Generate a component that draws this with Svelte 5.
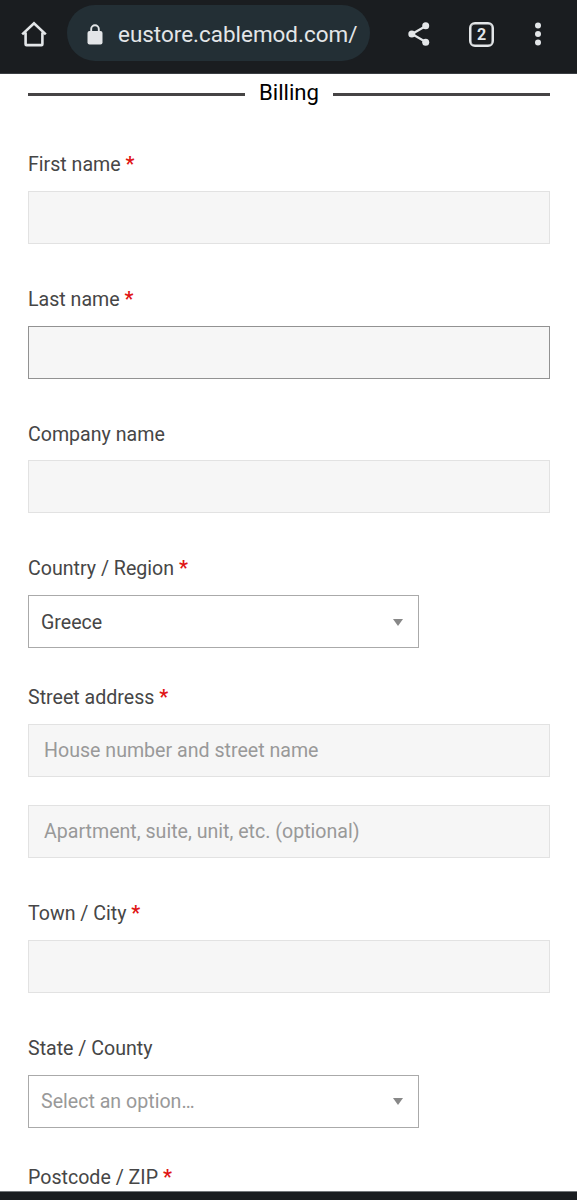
<script>
  let url = "eustore.cablemod.com/";
  let openTabs = 2;

  let fields = [
    { label: "First name", required: true, inputs: [""] },
    { label: "Last name", required: true, inputs: [""], active: true },
    { label: "Company name", inputs: [""] },
    { label: "Country / Region", required: true, select: "Greece" },
    {
      label: "Street address",
      required: true,
      inputs: [
        "House number and street name",
        "Apartment, suite, unit, etc. (optional)",
      ],
    },
    { label: "Town / City", required: true, inputs: [""] },
    { label: "State / County", select: "Select an option…", empty: true },
    { label: "Postcode / ZIP", required: true },
  ];
</script>

<div class="screen">
  <header class="toolbar">
    <svg class="home" width="26" height="26" viewBox="0 0 26 26">
      <path
        d="M1.2 13.4 13 2.2l11.8 11.2M4.6 11.4V23.2q0 .9.9.9H20.5q.9 0 .9-.9V11.4"
        fill="none"
        stroke="currentColor"
        stroke-width="2.6"
      />
    </svg>

    <div class="address">
      <svg width="16" height="21" viewBox="0 0 16 21">
        <path d="M4.2 8.5V5a3.8 3.8 0 0 1 7.6 0v3.5" fill="none" stroke="currentColor" stroke-width="1.9" />
        <rect x="0.5" y="7" width="15" height="13.5" rx="2" fill="currentColor" />
      </svg>
      <span>{url}</span>
    </div>

    <svg class="share" width="22" height="24" viewBox="0 0 22 24">
      <path d="M17.8 4 4 12l13.8 8" fill="none" stroke="currentColor" stroke-width="2.2" />
      <circle cx="17.7" cy="3.8" r="3.5" fill="currentColor" />
      <circle cx="3.8" cy="12" r="3.5" fill="currentColor" />
      <circle cx="17.7" cy="20.2" r="3.5" fill="currentColor" />
    </svg>

    <div class="tabs">{openTabs}</div>

    <svg class="more" width="8" height="24" viewBox="0 0 8 24">
      <circle cx="4" cy="3.4" r="3" fill="currentColor" />
      <circle cx="4" cy="11.9" r="3" fill="currentColor" />
      <circle cx="4" cy="20.4" r="3" fill="currentColor" />
    </svg>
  </header>

  <main class="checkout">
    <h2 class="heading"><span>Billing</span></h2>

    {#each fields as field}
      <div class="field" class:has-select={field.select}>
        <div class="label">
          {field.label}
          {#if field.required}<b class="required">*</b>{/if}
        </div>

        {#if field.select}
          <div class="select" class:empty={field.empty}>
            <span>{field.select}</span>
            <i class="arrow"></i>
          </div>
        {:else if field.inputs}
          <div class="inputs">
            {#each field.inputs as placeholder}
              <input type="text" {placeholder} aria-label={field.label} class:active={field.active} />
            {/each}
          </div>
        {/if}
      </div>
    {/each}
  </main>

  <div class="nav-bar"></div>
</div>

<style>
  :global(body) {
    margin: 0;
    background: #fff;
    font-family: Roboto, "Liberation Sans", sans-serif;
  }

  .screen {
    display: flex;
    flex-direction: column;
    height: 1200px;
    overflow: hidden;
  }

  .toolbar {
    display: flex;
    flex: none;
    align-items: center;
    box-sizing: border-box;
    height: 74px;
    padding: 0 35px 5px 21px;
    background: #1a1d20;
    border-bottom: 1px solid #3a3e42;
    color: #e3e6e8;
  }

  .toolbar svg {
    flex: none;
  }

  .address {
    display: flex;
    align-items: center;
    box-sizing: border-box;
    width: 303px;
    height: 56px;
    margin: 0 0 2px 20px;
    padding: 2px 0 0 20px;
    border-radius: 28px;
    background: #232f35;
    font-size: 22.45px;
    white-space: nowrap;
  }

  .address svg {
    margin-right: 15px;
  }

  .share {
    margin-left: 38px;
  }

  .tabs {
    box-sizing: border-box;
    width: 25px;
    height: 25px;
    margin-left: 39px;
    border: 2px solid currentColor;
    border-radius: 6px;
    box-shadow: inset 0 0 0 0.5px currentColor;
    font-size: 16px;
    font-weight: 700;
    line-height: 21px;
    text-align: center;
  }

  .more {
    margin-left: auto;
  }

  .checkout {
    flex: 1;
    min-height: 0;
    overflow: hidden;
    padding: 3px 27px 0 28px;
  }

  .heading {
    display: flex;
    align-items: center;
    gap: 14px;
    height: 30px;
    margin: 0 0 43.4px;
    color: #000;
    font-size: 22.2px;
    font-weight: 400;
  }

  .heading::before,
  .heading::after {
    content: "";
    flex: 1;
    height: 3px;
    margin-top: 4px;
    background: #464445;
  }

  .field {
    padding-bottom: 41px;
    color: #464646;
    font-size: 19.6px;
  }

  .field.has-select {
    padding-bottom: 35.3px;
  }

  .label {
    height: 27.7px;
    margin-bottom: 13px;
    line-height: 29px;
  }

  .required {
    color: #e01515;
  }

  .inputs {
    display: grid;
    gap: 28.3px;
  }

  input,
  .select {
    box-sizing: border-box;
    height: 53px;
    border: 1px solid #e2e2e2;
    border-radius: 0;
    color: inherit;
    font: inherit;
  }

  input {
    width: 100%;
    padding: 0 15px;
    background: #f6f6f6;
    outline: none;
  }

  input.active {
    border-color: #929292;
  }

  input::placeholder {
    color: #999;
    opacity: 1;
  }

  .select {
    display: flex;
    align-items: center;
    justify-content: space-between;
    width: 391px;
    padding: 1px 15px 0 12px;
    border-color: #aaa;
    background: #fff;
  }

  .select.empty {
    color: #999;
  }

  .arrow {
    border: 5.5px solid transparent;
    border-top: 7px solid #888;
    border-bottom: 0;
  }

  .nav-bar {
    flex: none;
    height: 8px;
    border-top: 1px solid #73777a;
    background: #1a1d20;
  }
</style>
